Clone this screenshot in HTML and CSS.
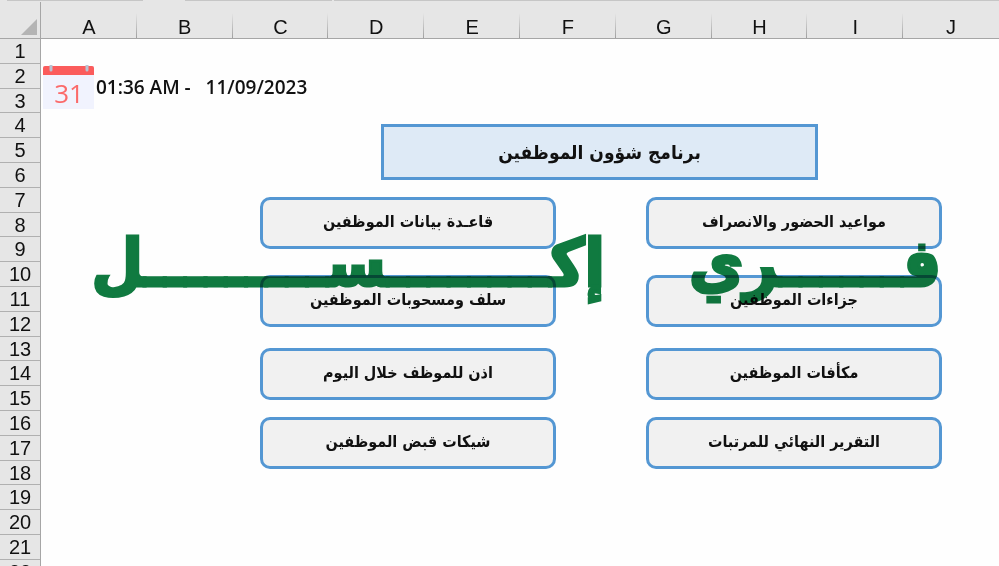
FILE: index.html
```
<!DOCTYPE html>
<html lang="ar">

<head>
    <meta charset="UTF-8">
    <meta name="viewport" content="width=device-width, initial-scale=1.0">
    <title>برنامج شؤون الموظفين</title>
    <link rel="stylesheet" href="styles.css">
</head>

<body>

    <div class="sheet">
        <div class="formula-edge"><span></span><span></span><span></span></div>

        <div class="corner">
            <svg width="16" height="16" viewBox="0 0 16 16"><path d="M16 0V16H0Z" fill="#b4b4b4"/></svg>
        </div>

        <div class="columns">
            <span>A</span><span>B</span><span>C</span><span>D</span><span>E</span>
            <span>F</span><span>G</span><span>H</span><span>I</span><span>J</span>
        </div>

        <div class="rows">
            <span>1</span><span>2</span><span>3</span><span>4</span><span>5</span><span>6</span>
            <span>7</span><span>8</span><span>9</span><span>10</span><span>11</span><span>12</span>
            <span>13</span><span>14</span><span>15</span><span>16</span><span>17</span><span>18</span>
            <span>19</span><span>20</span><span>21</span><span>22</span>
        </div>

        <main class="cells">
            <div class="clock">
                <svg class="calendar" width="52" height="44" viewBox="0 0 52 44">
                    <rect x="0" y="1" width="51" height="43" fill="#f1f3fe"/>
                    <path d="M0 3Q0 1 2 1H49Q51 1 51 3V10H0Z" fill="#fb5c5c"/>
                    <path d="M8 0V5M44 0V5" stroke="#b9c3d2" stroke-width="3" stroke-linecap="round"/>
                    <text x="26" y="38" text-anchor="middle">31</text>
                </svg>
                <time datetime="2023-09-11T01:36">01:36 AM -&nbsp;&nbsp; 11/09/2023</time>
            </div>

            <div class="heading">
                <h1 dir="rtl">برنامج شؤون الموظفين</h1>
            </div>

            <nav class="menu" dir="rtl">
                <button class="right">مواعيد الحضور والانصراف</button>
                <button class="left">قاعـدة بيانات الموظفين</button>
                <button class="right">جزاءات الموظفين</button>
                <button class="left">سلف ومسحوبات الموظفين</button>
                <button class="right">مكأفات الموظفين</button>
                <button class="left">اذن للموظف خلال اليوم</button>
                <button class="right">التقرير النهائي للمرتبات</button>
                <button class="left">شيكات قبض الموظفين</button>
            </nav>

            <div class="watermark" dir="rtl">
                <span>فــــــري</span>
                <span>إكــــــــســـــــــل</span>
            </div>
        </main>
    </div>

</body>

</html>
```

FILE: styles.css
```
body {
    margin: 0;
    background-color: #fefefe;
    color: #111;
    font-family: "Liberation Sans", "DejaVu Sans", sans-serif;
}

.sheet {
    display: grid;
    grid-template-columns: 41px 1fr;
    grid-template-rows: 2px 37px 1fr;
    height: 100vh;
    overflow: hidden;
}

/* bottom edge of the formula bar */
.formula-edge {
    grid-column: 1 / -1;
    display: grid;
    grid-template-columns: 136fr 188fr 667fr;
    column-gap: 2px;
    padding-left: 7px;
    background-color: #e6e6e6;
}

.formula-edge span {
    height: 1px;
    background-color: #c6c6c6;
}

.formula-edge span:nth-child(2) {
    margin-left: 40px;
}

.corner {
    display: flex;
    justify-content: flex-end;
    align-items: flex-end;
    padding: 0 3px 3px 0;
    background-color: #e6e6e6;
    border-right: 1px solid #a6a6a6;
    border-bottom: 1px solid #a6a6a6;
}

.columns {
    display: grid;
    grid-template-columns: repeat(10, 1fr);
    background-color: #e6e6e6;
    border-bottom: 1px solid #a6a6a6;
}

.columns span {
    padding-top: 14px;
    text-align: center;
    font-size: 20px;
    line-height: 22px;
    background: linear-gradient(transparent, #a0a0a0) right bottom / 1px 25px no-repeat;
}

.columns span:last-child {
    background: none;
}

.rows {
    display: grid;
    grid-template-rows: repeat(21, minmax(0, 4fr)) minmax(0, 1fr);
    min-height: 0;
    overflow: hidden;
    background-color: #e6e6e6;
    border-right: 1px solid #a6a6a6;
}

.rows span {
    box-sizing: border-box;
    border-bottom: 1px solid #b0b0b0;
    text-align: center;
    font-size: 20px;
    line-height: 24px;
}

.rows span:last-child {
    border-bottom: none;
}

.cells {
    position: relative;
    min-width: 0;
    min-height: 0;
}

.clock {
    display: flex;
    align-items: center;
    gap: 1px;
    padding: 26px 0 0 2px;
}

.clock time {
    font-family: "Open Sans", sans-serif;
    font-size: 19px;
    font-weight: 600;
    line-height: 44px;
}

.calendar text {
    font-family: "Open Sans", sans-serif;
    font-size: 26px;
    fill: #fb6a6a;
}

.heading {
    display: grid;
    grid-template-columns: 340fr 437fr 181fr;
    padding-top: 15px;
}

.heading h1 {
    grid-column: 2;
    margin: 0;
    border: 3px solid #5497d3;
    background-color: #deeaf6;
    text-align: center;
    font-family: "DejaVu Sans Condensed", "DejaVu Sans", sans-serif;
    font-size: 19px;
    line-height: 50px;
}

.menu {
    display: grid;
    grid-template-columns: 57fr 296fr 90fr 296fr 219fr;
    grid-template-rows: 78px 73px 69px 52px;
    align-items: start;
    padding-top: 17px;
}

.menu button {
    height: 52px;
    padding: 0 0 4px;
    border: 3px solid #5497d3;
    border-radius: 10px;
    background-color: #f1f1f1;
    color: #111;
    font-family: "DejaVu Sans Condensed", "DejaVu Sans", sans-serif;
    font-size: 16px;
    font-weight: bold;
    white-space: nowrap;
}

.menu .right {
    grid-column: 2;
}

.menu .left {
    grid-column: 4;
}

.watermark {
    position: absolute;
    top: 180px;
    right: 58px;
    display: flex;
    gap: 84px;
    color: #107a40;
    font-family: "DejaVu Sans Condensed", "DejaVu Sans", sans-serif;
    font-size: 66px;
    font-weight: bold;
    line-height: 90px;
    white-space: nowrap;
    -webkit-text-stroke: 3px #107a40;
    mix-blend-mode: multiply;
    pointer-events: none;
}
```
